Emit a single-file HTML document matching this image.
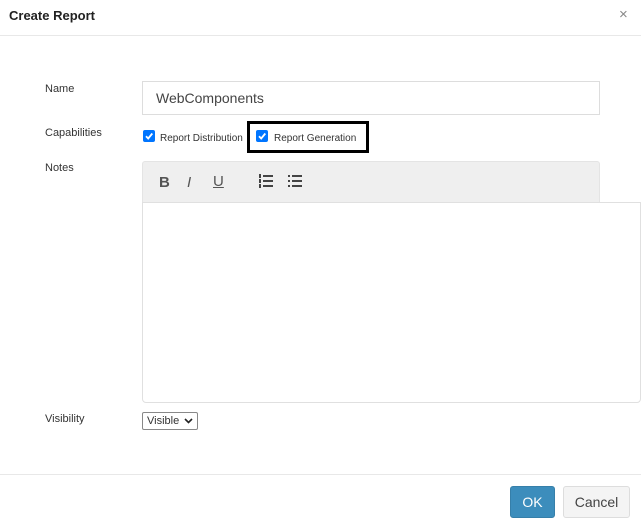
<!DOCTYPE html>
<html><head><style>
body{margin:0;width:641px;height:526px;background:#fff;font-family:"Liberation Sans",sans-serif;position:relative;overflow:hidden;color:#333}
.a{position:absolute}
.lbl{font-size:11px;color:#333}
.cb{width:12px;height:12px;background:#0075ff;border-radius:2px}
.cb svg{display:block}
</style></head><body>
<div class="a" style="left:9px;top:8px;font-size:13px;font-weight:bold;color:#222">Create Report</div>
<div class="a" style="left:619px;top:6px;font-size:15px;color:#888">×</div>
<div class="a" style="left:0;top:35px;width:641px;height:1px;background:#e8e8e8"></div>

<div class="a lbl" style="left:45px;top:83px">Name</div>
<div class="a" style="left:142px;top:81px;width:456px;height:32px;border:1px solid #ddd;box-sizing:content-box"></div>
<div class="a" style="left:156px;top:90px;font-size:14px;color:#444">WebComponents</div>

<div class="a lbl" style="left:45px;top:127px">Capabilities</div>
<div class="a cb" style="left:143px;top:130px"><svg width="12" height="12"><path d="M3 6.2l2.2 2.3L9.3 3.5" stroke="#fff" stroke-width="1.8" fill="none"/></svg></div>
<div class="a lbl" style="left:160px;top:133px;font-size:10px">Report Distribution</div>
<div class="a" style="left:247px;top:121px;width:116px;height:26px;border:3px solid #000"></div>
<div class="a cb" style="left:256px;top:130px"><svg width="12" height="12"><path d="M3 6.2l2.2 2.3L9.3 3.5" stroke="#fff" stroke-width="1.8" fill="none"/></svg></div>
<div class="a lbl" style="left:274px;top:133px;font-size:10px">Report Generation</div>

<div class="a lbl" style="left:45px;top:162px">Notes</div>
<div class="a" style="left:142px;top:161px;width:456px;height:40px;background:#efefef;border:1px solid #e4e4e4;border-radius:3px 3px 0 0"></div>
<div class="a" style="left:142px;top:202px;width:497px;height:199px;border:1px solid #e0e0e0;border-radius:0 0 4px 4px"></div>
<div class="a" style="left:159px;top:174px;font-size:15px;font-weight:bold;color:#555">B</div>
<div class="a" style="left:187px;top:174px;font-size:15px;font-style:italic;color:#555">I</div>
<div class="a" style="left:213px;top:173px;font-size:15px;text-decoration:underline;color:#555">U</div>
<svg class="a" style="left:258px;top:174px" width="16" height="14"><g fill="#444"><rect x="5" y="1" width="10" height="2"/><rect x="5" y="6" width="10" height="2"/><rect x="5" y="11" width="10" height="2"/><rect x="1" y="0" width="2" height="4"/><rect x="1" y="5" width="2" height="4"/><rect x="1" y="10" width="2" height="4"/></g></svg>
<svg class="a" style="left:287px;top:174px" width="16" height="14"><g fill="#444"><rect x="5" y="1" width="10" height="2"/><rect x="5" y="6" width="10" height="2"/><rect x="5" y="11" width="10" height="2"/><rect x="1" y="1" width="2" height="2"/><rect x="1" y="6" width="2" height="2"/><rect x="1" y="11" width="2" height="2"/></g></svg>

<div class="a lbl" style="left:45px;top:413px">Visibility</div>
<div class="a" style="left:142px;top:412px;border:1px solid #888;border-radius:2px;font-size:11px;line-height:16px;padding-left:4px;box-sizing:border-box;width:56px;height:18px">Visible<svg style="position:absolute;right:4px;top:5px" width="9" height="6"><path d="M1 1l3.5 3.5L8 1" stroke="#222" stroke-width="1.6" fill="none"/></svg></div>

<div class="a" style="left:0;top:474px;width:641px;height:1px;background:#e8e8e8"></div>
<div class="a" style="left:510px;top:486px;width:45px;height:32px;background:#3c8dbc;border:1px solid #367fa9;border-radius:3px;box-sizing:border-box;color:#fff;font-size:14px;text-align:center;line-height:30px">OK</div>
<div class="a" style="left:563px;top:486px;width:67px;height:32px;background:#f4f4f4;border:1px solid #ddd;border-radius:3px;box-sizing:border-box;color:#444;font-size:14px;text-align:center;line-height:30px">Cancel</div>
</body></html>
